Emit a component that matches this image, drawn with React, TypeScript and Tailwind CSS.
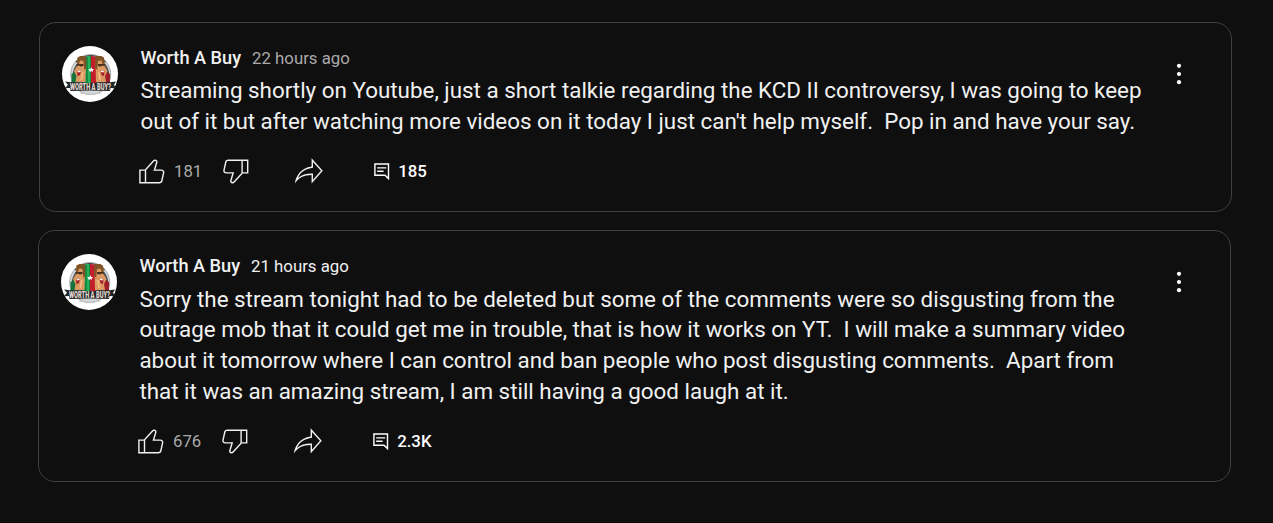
type Post = {
  id: number;
  author: string;
  time: string;
  timeClass: string;
  lines: string[];
  likes: string;
  comments: string;
  cardClass: string;
  bodyClass: string;
  menuClass: string;
};

const POSTS: Post[] = [
  {
    id: 1,
    author: 'Worth A Buy',
    time: '22 hours ago',
    timeClass: 'text-[#aaa]',
    lines: [
      'Streaming shortly on Youtube, just a short talkie regarding the KCD II controversy, I was going to keep',
      "out of it but after watching more videos on it today I just can't help myself.  Pop in and have your say.",
    ],
    likes: '181',
    comments: '185',
    cardClass: 'ml-[39px] h-[190px]',
    bodyClass: 'mt-[5px] mb-[17px]',
    menuClass: 'mr-[49px]',
  },
  {
    id: 2,
    author: 'Worth A Buy',
    time: '21 hours ago',
    timeClass: 'text-[#f1f1f1]',
    lines: [
      'Sorry the stream tonight had to be deleted but some of the comments were so disgusting from the',
      'outrage mob that it could get me in trouble, that is how it works on YT.  I will make a summary video',
      'about it tomorrow where I can control and ban people who post disgusting comments.  Apart from',
      'that it was an amazing stream, I am still having a good laugh at it.',
    ],
    likes: '676',
    comments: '2.3K',
    cardClass: 'ml-[38px] h-[252px]',
    bodyClass: 'mt-[5.5px] mb-[17px]',
    menuClass: 'mr-[48.5px]',
  },
];

function LikeIcon() {
  return (
    <svg viewBox="0 0 24 24" className="size-[33.6px] shrink-0" fill="currentColor">
      <path d="M18.77,11h-4.23l1.52-4.94C16.38,5.03,15.54,4,14.38,4c-0.58,0-1.14,0.24-1.52,0.65L7,11H3v10h4h1h9.43c1.06,0,1.98-0.67,2.19-1.61l1.34-6C21.23,12.15,20.18,11,18.77,11z M7,20H4v-8h3V20z M19.98,13.17l-1.34,6C18.54,19.65,18.03,20,17.43,20H8v-8.61l5.6-6.06C13.79,5.12,14.08,5,14.38,5c0.26,0,0.5,0.11,0.63,0.3c0.07,0.1,0.15,0.26,0.09,0.47l-1.52,4.94L13.18,12h1.35h4.23c0.41,0,0.8,0.17,1.03,0.46C19.92,12.61,20.05,12.86,19.98,13.17z" />
    </svg>
  );
}

function DislikeIcon() {
  return (
    <svg viewBox="0 0 24 24" className="size-[33.6px] shrink-0" fill="currentColor">
      <path d="M17,4h-1H6.57C5.5,4,4.59,4.67,4.38,5.61l-1.34,6C2.77,12.85,3.82,14,5.23,14h4.23l-1.52,4.94C7.62,19.97,8.46,21,9.62,21c0.58,0,1.14-0.24,1.52-0.65L17,14h4V4H17z M10.4,19.67C10.21,19.88,9.92,20,9.62,20c-0.26,0-0.5-0.11-0.63-0.3c-0.07-0.1-0.15-0.26-0.09-0.47l1.52-4.94l0.4-1.29H9.46H5.23c-0.41,0-0.8-0.17-1.03-0.46c-0.12-0.15-0.25-0.4-0.18-0.72l1.34-6C5.46,5.35,5.97,5,6.57,5H16v8.61L10.4,19.67z M20,13h-3V5h3V13z" />
    </svg>
  );
}

function ShareIcon() {
  return (
    <svg viewBox="0 0 24 24" className="size-[33.6px] shrink-0" fill="currentColor">
      <path d="M15,5.63L20.66,12L15,18.37V15v-1h-1c-3.96,0-7.14,1-9.75,3.09c1.84-4.07,5.11-6.4,9.89-7.1L15,9.86V9V5.63M14,3v6C6.22,10.13,3.11,15.33,2,21c2.78-3.97,6.44-6,12-6v6l8-9L14,3L14,3z" />
    </svg>
  );
}

function CommentIcon() {
  return (
    <svg viewBox="0 0 16 17" className="h-[17px] w-4 shrink-0" fill="none" stroke="currentColor" strokeWidth="1.4">
      <path d="M.9 1h13.6v14.6L11 12.2H.9z" />
      <path d="M3.2 4.9h9M3.2 8.3h6.4" />
    </svg>
  );
}

function MenuIcon() {
  return (
    <svg viewBox="0 0 6 22" className="h-[22px] w-1.5" fill="currentColor">
      <circle cx="3" cy="2.8" r="2.1" />
      <circle cx="3" cy="11" r="2.1" />
      <circle cx="3" cy="19.2" r="2.1" />
    </svg>
  );
}

function Face({ flip }: { flip?: boolean }) {
  return (
    <g transform={flip ? 'translate(57.5 0) scale(-1 1)' : undefined}>
      <path d="M15.5 11h7.5l1 7-.5 18H13.5l1-6-2.5-5 3-5z" fill="#dc9a62" />
      <path d="M15 18l.5-6 2.5-2h5.5l.8 3v9l-2 2-.8-9-3.5-.5-1 3.5z" fill="#805327" />
      <path d="M14.5 18h7v2l-3 .6-1.5-1-2 .6z" fill="#49301d" />
      <path d="M15 25.5l4-1-1 4.5-2.4 1.3z" fill="#a51f2b" />
      <path d="M15.5 25.3l3.3-.7-.3 1.4-2.5.4z" fill="#fff" />
      <path d="M20.8 26l-1.5 8" stroke="#f4bd85" strokeWidth="1.5" />
    </g>
  );
}

function Avatar() {
  return (
    <svg viewBox="0 0 56 56" className="size-14 shrink-0">
      <circle cx="28" cy="28" r="28" fill="#fff" />
      <circle cx="28.7" cy="28.5" r="20" fill="#d5d7d8" stroke="#a8abac" />
      <path d="M14 16a20 20 0 0 1 29.5 0" fill="none" stroke="#383d3f" strokeWidth="1.2" />
      <path d="M11 26q3-13 18-16 15 3 18 16v12H11z" fill="#4a4f51" />
      <path d="M9.5 37v-9l6-4v13z" fill="#15743b" />
      <path d="M48 37v-9l-6-4v13z" fill="#9e1f2a" />
      <path d="M22 11l7-1v27h-7z" fill="#138b43" />
      <path d="M26 10h2v27h-2z" fill="#25b45c" />
      <path d="M29 10l6 1v26h-6z" fill="#c31f2b" />
      <Face />
      <Face flip />
      <path d="M26.5 23h2l.7-2 1 2h2l-1.5 1.3.4 1.7-1.6-1-1.6 1z" fill="#fff" />
      <path d="M3 35.5l6 .8v-.3q18 1.8 39 0v.3l6-.8-2 3.2 2 3.5-5.5-.2-.5 3q-20-1.2-39.5 0l-.5-3-5 .2 3-3.5z" fill="#202526" />
      <text
        x="28.5"
        y="43.8"
        textAnchor="middle"
        textLength="41"
        lengthAdjust="spacingAndGlyphs"
        fontFamily="Roboto, sans-serif"
        fontSize="8.5"
        fontWeight="900"
        fill="#e6d9d2"
      >
        WORTH A BUY?
      </text>
      <path d="M18 47q10 3 21 0" fill="none" stroke="#c6c6c6" />
    </svg>
  );
}

function PostCard({ post }: { post: Post }) {
  return (
    <article className={`${post.cardClass} flex w-[1193px] rounded-[17px] border border-[#3f3f3f] pt-[22px] pl-[22px]`}>
      <div className="mt-px">
        <Avatar />
      </div>
      <div className="ml-[22.4px] flex-1">
        <header className="flex h-[25px] items-center gap-[11px] leading-[25px]">
          <span className="text-[18.2px] font-medium text-[#f1f1f1]">{post.author}</span>
          <span className={`mt-[2px] text-[16.8px] ${post.timeClass}`}>{post.time}</span>
        </header>
        <div className={`${post.bodyClass} text-[22.4px] leading-[30.8px] whitespace-pre text-[#f1f1f1]`}>
          {post.lines.map(line => (
            <p key={line}>{line}</p>
          ))}
        </div>

        {/* Actions */}
        <div className="-ml-[5.6px] flex h-[35px] items-center pt-px text-[#f1f1f1]">
          <button title="Like" className="mb-px"><LikeIcon /></button>
          <span className="ml-[5.6px] w-[45px] text-[16.8px] text-[#aaa]">{post.likes}</span>
          <button title="Dislike" className="mb-px"><DislikeIcon /></button>
          <button title="Share" className="mb-px ml-[39px]"><ShareIcon /></button>
          <button className="ml-[49px] flex items-center gap-[8px] text-[16.8px] font-medium text-white" title="Comments">
            <CommentIcon />
            <span>{post.comments}</span>
          </button>
        </div>
      </div>
      <button title="More" className={`${post.menuClass} mt-[18px] h-[22px] text-white`}>
        <MenuIcon />
      </button>
    </article>
  );
}

export default function App() {
  return (
    <main className="flex h-[523px] w-[1273px] flex-col gap-[18px] overflow-hidden border-b border-black bg-[#0f0f0f] pt-[22px] font-['Roboto',sans-serif]">
      {POSTS.map(post => (
        <PostCard key={post.id} post={post} />
      ))}
    </main>
  );
}
